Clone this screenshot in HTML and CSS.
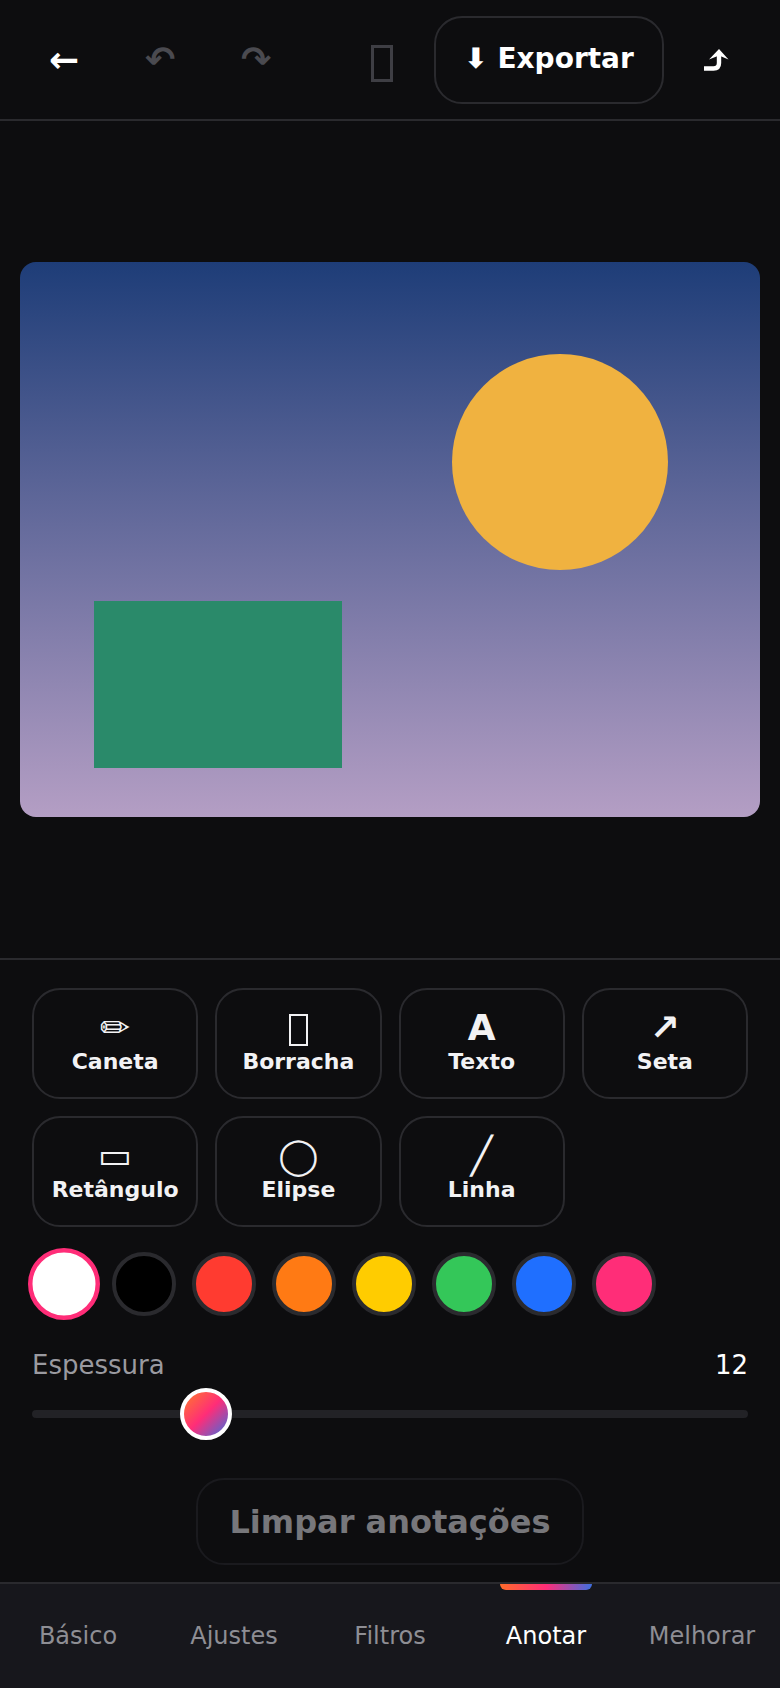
FILE: index.html
```html
<!DOCTYPE html>
<html lang="pt">
<head>
<meta charset="utf-8">
<title>Anotar</title>
<link rel="stylesheet" href="styles.css">
</head>
<body>
<div class="app">
  <header class="topbar">
    <div class="group">
      <button class="icon-btn">←</button>
      <button class="icon-btn dim">↶</button>
      <button class="icon-btn dim">↷</button>
    </div>
    <div class="group right">
      <button class="icon-btn"><span class="tofu top"></span></button>
      <button class="export">⬇ Exportar</button>
      <button class="icon-btn">
        <svg class="share" viewBox="0 0 30 26" width="30" height="26">
          <path d="M3 21.5H12.5Q18 21.5 18 16V5" fill="none" stroke="#fff" stroke-width="4.4"/>
          <path d="M8 12.5L18 2L27.5 12.5L18 8.6Z" fill="#fff"/>
        </svg>
      </button>
    </div>
  </header>
  <main class="stage">
    <svg class="canvas" viewBox="0 0 740 555">
      <defs>
        <linearGradient id="sky" x1="0" y1="0" x2="0" y2="1">
          <stop offset="0" stop-color="#1e3d78"/>
          <stop offset="1" stop-color="#b49ec4"/>
        </linearGradient>
      </defs>
      <rect width="740" height="555" fill="url(#sky)"/>
      <circle cx="540" cy="200" r="108" fill="#f0b240"/>
      <rect x="74" y="339" width="248" height="167" fill="#2a8a6a"/>
    </svg>
  </main>
  <section class="panel">
    <div class="tools">
      <button class="tool"><span class="glyph">✏</span><span>Caneta</span></button>
      <button class="tool"><span class="glyph"><span class="tofu"></span></span><span>Borracha</span></button>
      <button class="tool"><span class="glyph">A</span><span>Texto</span></button>
      <button class="tool"><span class="glyph">↗</span><span>Seta</span></button>
      <button class="tool"><span class="glyph">▭</span><span>Retângulo</span></button>
      <button class="tool"><span class="glyph">◯</span><span>Elipse</span></button>
      <button class="tool"><span class="glyph">╱</span><span>Linha</span></button>
    </div>
    <div class="swatches">
      <span class="swatch on c-white"></span>
      <span class="swatch c-black"></span>
      <span class="swatch c-red"></span>
      <span class="swatch c-orange"></span>
      <span class="swatch c-yellow"></span>
      <span class="swatch c-green"></span>
      <span class="swatch c-blue"></span>
      <span class="swatch c-pink"></span>
    </div>
    <div class="row"><span class="label">Espessura</span><span class="value">12</span></div>
    <div class="slider"><span class="thumb"></span></div>
    <div class="clear-wrap"><button class="clear">Limpar anotações</button></div>
  </section>
  <nav class="tabs">
    <span class="tab">Básico</span>
    <span class="tab">Ajustes</span>
    <span class="tab">Filtros</span>
    <span class="tab active">Anotar</span>
    <span class="tab">Melhorar</span>
  </nav>
</div>
</body>
</html>
```
FILE: styles.css
```css
* { box-sizing: border-box; }
html, body { margin: 0; padding: 0; background: #0d0d0f; }
body { font-family: "DejaVu Sans", sans-serif; color: #fff; }
button { font-family: inherit; background: none; border: 0; color: inherit; padding: 0; margin: 0; }
.app { width: 780px; height: 1688px; display: flex; flex-direction: column; }

.topbar { height: 121px; flex: none; padding: 0 16px; display: flex; align-items: center; justify-content: space-between; border-bottom: 2px solid #2a2a2e; }
.group { display: flex; align-items: center; }
.group.right { gap: 4px; }
.icon-btn { width: 96px; height: 88px; font-size: 36px; font-weight: 700; color: #fff; display: flex; align-items: center; justify-content: center; }
.icon-btn.dim { color: #4a4a50; }
.tofu { display: inline-block; width: 19px; height: 32px; border: 2px solid currentColor; vertical-align: middle; }
.tofu.top { width: 22px; height: 37px; border-width: 3px; color: #3e3e44; margin-top: 7px; }
.share { display: block; margin-top: 1px; }
.export { width: 230px; height: 88px; padding-bottom: 2px; border: 2px solid #2a2a2e; border-radius: 28px; font-size: 28px; font-weight: 700; }

.stage { flex: 1; padding: 0 20px; display: flex; align-items: center; }
.canvas { display: block; width: 740px; height: 555px; border-radius: 16px; }

.panel { flex: none; height: 624px; padding: 28px 32px 0; border-top: 2px solid #2a2a2e; }
.tools { display: grid; grid-template-columns: repeat(4, 1fr); gap: 17px 17px; }
.tool { height: 111px; padding-bottom: 3px; border: 2px solid #2a2a2e; border-radius: 28px; display: flex; flex-direction: column; align-items: center; justify-content: center; font-size: 22px; font-weight: 700; color: #f2f2f4; line-height: 28px; }
.glyph { font-size: 36px; line-height: 40px; font-weight: 700; height: 40px; }

.swatches { display: flex; gap: 16px; margin-top: 25px; align-items: center; height: 64px; }
.swatch { width: 64px; height: 64px; border-radius: 50%; border: 4px solid #2a2a2e; flex: none; }
.swatch.on { border-color: #ff2d78; transform: scale(1.125); }
.c-white { background: #fff; } .c-black { background: #000; } .c-red { background: #ff3b30; }
.c-orange { background: #ff7a14; } .c-yellow { background: #ffcc00; } .c-green { background: #34c759; }
.c-blue { background: #1f6fff; } .c-pink { background: #ff2d78; }

.row { display: flex; justify-content: space-between; margin-top: 30px; font-size: 26px; line-height: 38px; }
.label { color: #9a9aa0; }
.slider { position: relative; height: 8px; margin-top: 26px; background: #222226; border-radius: 4px; }
.thumb { position: absolute; left: 148px; top: -22px; width: 52px; height: 52px; border-radius: 50%; border: 4px solid #fff; background: linear-gradient(135deg, #ff7a2a, #ff2d78 50%, #3d6fe0); }

.clear-wrap { display: flex; justify-content: center; margin-top: 60px; }
.clear { width: 388px; height: 87px; border: 2px solid #1a1a1e; border-radius: 28px; font-size: 32px; font-weight: 700; color: #77777b; }

.tabs { flex: none; height: 106px; display: grid; grid-template-columns: repeat(5, 1fr); align-items: center; background: #17171c; border-top: 2px solid #2a2a2e; }
.tab { position: relative; height: 100%; display: flex; align-items: center; justify-content: center; font-size: 24px; color: #8e8e94; }
.tab.active { color: #fff; }
.tab.active::before { content: ""; position: absolute; top: 0; left: 32px; width: 92px; height: 6px; border-radius: 0 0 6px 6px; background: linear-gradient(90deg, #ff6b2a, #ff2d78 50%, #3d6fe0); }
```
